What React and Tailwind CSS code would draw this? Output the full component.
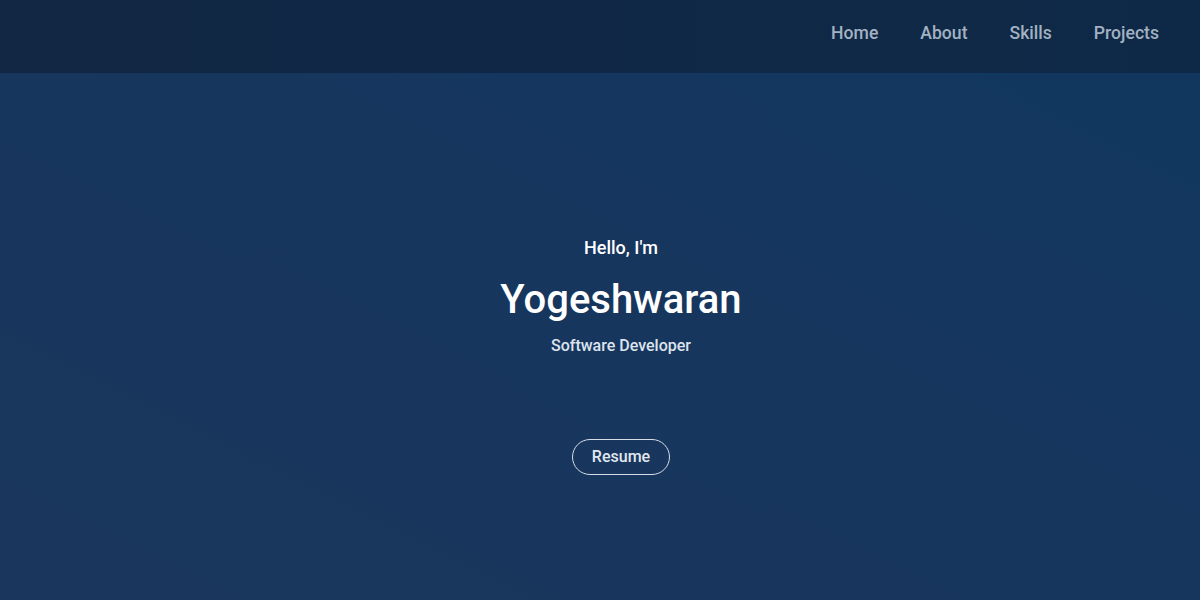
export default function App() {
  return (
    <div
      className="w-[1200px] h-[600px] flex flex-col bg-[linear-gradient(to_top_right,#1a365c,#17365e_50%,#10375f)] text-white"
      style={{ fontFamily: "Roboto, 'Noto Sans', sans-serif" }}
    >
      <header className="h-[73px] shrink-0 flex items-center justify-end pr-[41px] pb-[6px] bg-[linear-gradient(to_right,#112744,#0e2947)]">
        <nav className="flex items-center gap-[42px] text-[17.6px] font-medium text-[#a3b1c2]">
          <a className="leading-none">Home</a>
          <a className="leading-none">About</a>
          <a className="leading-none">Skills</a>
          <a className="leading-none">Projects</a>
        </nav>
      </header>
      <main className="flex-1 flex flex-col items-center pl-[42px]">
        <p className="mt-[165px] text-[18px] font-medium leading-[20px]">Hello, I&apos;m</p>
        <h1 className="mt-[20px] text-[40px] font-medium leading-[44px]">Yogeshwaran</h1>
        <p className="mt-[15px] text-[16px] font-medium leading-[18px] text-[#dde4ee]">Software Developer</p>
        <button className="mt-[84px] h-[36px] px-[19px] rounded-full border border-[#d7dde6] text-[16px] font-medium text-[#e2e8f0] leading-none">
          Resume
        </button>
      </main>
    </div>
  );
}
